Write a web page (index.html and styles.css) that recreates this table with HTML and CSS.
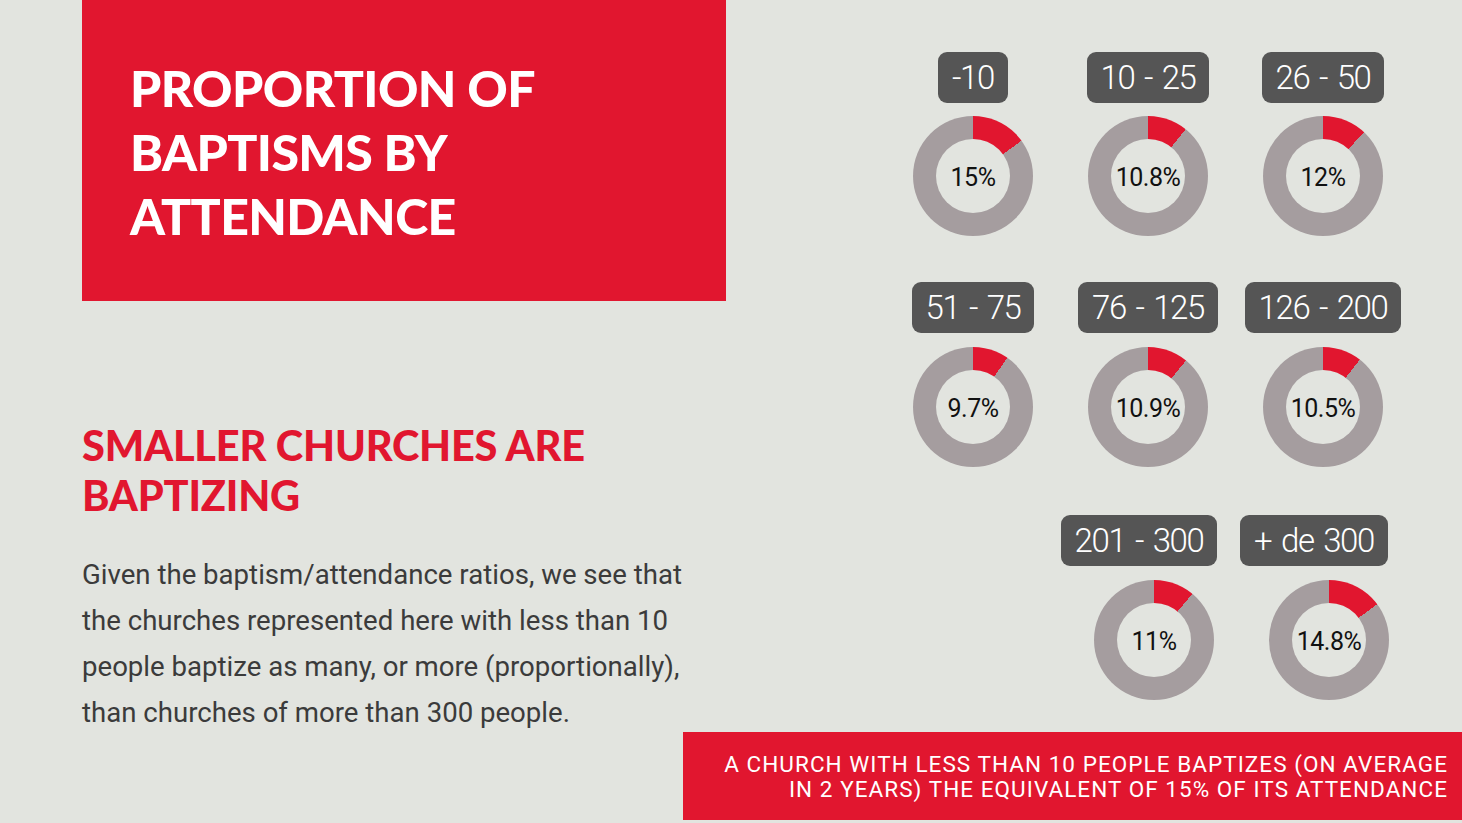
FILE: index.html
```html
<!DOCTYPE html>
<html lang="en">
<head>
<meta charset="utf-8">
<title>Proportion of baptisms by attendance</title>
<link rel="stylesheet" href="styles.css">
</head>
<body>
<div class="page">
  <div class="top">
    <section class="left">
      <div class="hero">
        <h1 class="hero-title">PROPORTION OF<br>BAPTISMS BY<br>ATTENDANCE</h1>
      </div>
      <h2 class="subhead">SMALLER CHURCHES ARE<br>BAPTIZING</h2>
      <p class="body-text">Given the baptism/attendance ratios, we see that the churches represented here with less than 10 people baptize as many, or more (proportionally), than churches of more than 300 people.</p>
    </section>
    <section class="charts">
      <div class="row row-1">
        <div class="cell"><div class="tag">-10</div><div class="donut" style="--p:15%"><span class="pct">15%</span></div></div>
        <div class="cell"><div class="tag">10 - 25</div><div class="donut" style="--p:10.8%"><span class="pct">10.8%</span></div></div>
        <div class="cell"><div class="tag">26 - 50</div><div class="donut" style="--p:12%"><span class="pct">12%</span></div></div>
      </div>
      <div class="row row-2">
        <div class="cell"><div class="tag">51 - 75</div><div class="donut" style="--p:9.7%"><span class="pct">9.7%</span></div></div>
        <div class="cell"><div class="tag">76 - 125</div><div class="donut" style="--p:10.9%"><span class="pct">10.9%</span></div></div>
        <div class="cell"><div class="tag">126 - 200</div><div class="donut" style="--p:10.5%"><span class="pct">10.5%</span></div></div>
      </div>
      <div class="row row-3">
        <div class="cell"><div class="tag">201 - 300</div><div class="donut shifted" style="--p:11%"><span class="pct">11%</span></div></div>
        <div class="cell"><div class="tag">+ de 300</div><div class="donut shifted" style="--p:14.8%"><span class="pct">14.8%</span></div></div>
      </div>
    </section>
  </div>
  <footer class="callout">
    <p class="callout-text">A CHURCH WITH LESS THAN 10 PEOPLE BAPTIZES (ON AVERAGE<br>IN 2 YEARS) THE EQUIVALENT OF 15% OF ITS ATTENDANCE</p>
  </footer>
</div>
</body>
</html>
```

FILE: styles.css
```css
* { box-sizing: border-box; }

html, body {
  margin: 0;
  padding: 0;
}

body {
  background: #e2e4df;
  font-family: Roboto, "Liberation Sans", sans-serif;
  width: 1462px;
  height: 823px;
  overflow: hidden;
}

.page {
  width: 1462px;
  height: 823px;
  display: flex;
  flex-direction: column;
}

.top {
  display: flex;
  height: 732px;
}

.left {
  margin-left: 82px;
  width: 644px;
  flex: none;
}

.hero {
  background: #e1162f;
  height: 301px;
  padding: 56px 0 0 48px;
}

.hero-title {
  margin: 0;
  color: #ffffff;
  font-family: Lato, "Open Sans", sans-serif;
  font-weight: 900;
  font-size: 50px;
  line-height: 64px;
  letter-spacing: -0.6px;
}

.subhead {
  margin: 119px 0 0 0;
  color: #e1162f;
  font-family: Lato, "Open Sans", sans-serif;
  font-weight: 900;
  font-size: 41.5px;
  line-height: 50px;
  letter-spacing: -0.2px;
}

.body-text {
  margin: 32px 0 0 0;
  width: 615px;
  color: #3b3b3b;
  font-family: Roboto, "Liberation Sans", sans-serif;
  font-weight: 400;
  font-size: 27.6px;
  line-height: 46px;
}

.charts {
  padding-left: 159.5px;
  padding-top: 52px;
  display: flex;
  flex-direction: column;
}

.row {
  display: flex;
}

.row-2 { margin-top: 46px; }
.row-3 { margin-top: 48px; padding-left: 166px; }

.cell {
  width: 175px;
  display: flex;
  flex-direction: column;
  align-items: center;
  gap: 13px;
}

.row-2 .cell,
.row-3 .cell {
  gap: 14px;
}

.tag {
  height: 51px;
  padding: 0 14px;
  background: #555555;
  border-radius: 9px;
  color: #ffffff;
  font-family: Roboto, "Liberation Sans", sans-serif;
  font-weight: 300;
  font-size: 33px;
  line-height: 51px;
  letter-spacing: -1.4px;
  word-spacing: 3px;
  white-space: nowrap;
}

.donut {
  width: 120px;
  height: 120px;
  border-radius: 50%;
  background: conic-gradient(#e1162f 0 var(--p), #a59d9f var(--p) 100%);
  display: flex;
  align-items: center;
  justify-content: center;
}

.donut.shifted {
  margin-left: 30px;
}

.pct {
  width: 74px;
  height: 74px;
  border-radius: 50%;
  background: #e2e4df;
  display: flex;
  align-items: center;
  justify-content: center;
  padding-top: 2px;
  color: #111111;
  font-family: Roboto, "Liberation Sans", sans-serif;
  font-size: 25px;
  letter-spacing: -0.5px;
  white-space: nowrap;
}

.callout {
  margin-left: 683px;
  height: 88px;
  background: #e1162f;
  padding: 20px 14px 0 0;
}

.callout-text {
  margin: 0;
  text-align: right;
  color: #ffffff;
  font-family: Roboto, "Liberation Sans", sans-serif;
  font-size: 22.5px;
  line-height: 25px;
  letter-spacing: 1.05px;
}
```
